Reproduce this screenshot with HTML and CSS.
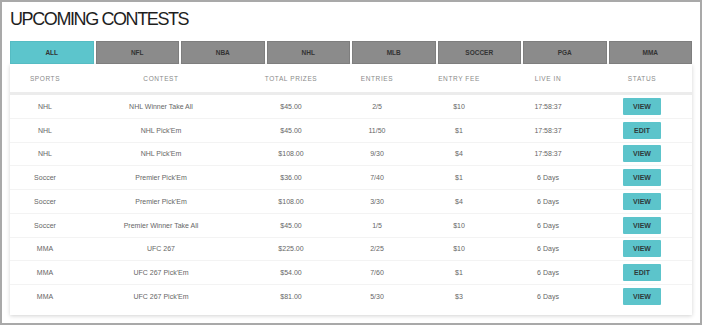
FILE: index.html
```html
<!DOCTYPE html>
<html lang="en">
<head>
    <meta charset="UTF-8">
    <meta name="viewport" content="width=device-width, initial-scale=1.0">
    <title>Upcoming Contests</title>
    <link rel="stylesheet" href="styles.css">
</head>
<body>

    <div class="frame">
        <h1>UPCOMING CONTESTS</h1>

        <!-- Sport Tabs -->
        <div class="tabs">
            <div class="tab active">ALL</div>
            <div class="tab">NFL</div>
            <div class="tab">NBA</div>
            <div class="tab">NHL</div>
            <div class="tab">MLB</div>
            <div class="tab">SOCCER</div>
            <div class="tab">PGA</div>
            <div class="tab">MMA</div>
        </div>

        <!-- Contests Table -->
        <div class="card">
            <div class="row head">
                <div>SPORTS</div>
                <div>CONTEST</div>
                <div>TOTAL PRIZES</div>
                <div>ENTRIES</div>
                <div>ENTRY FEE</div>
                <div>LIVE IN</div>
                <div>STATUS</div>
            </div>

            <div class="row">
                <div>NHL</div><div>NHL Winner Take All</div><div>$45.00</div><div>2/5</div><div>$10</div><div>17:58:37</div>
                <div><button class="btn">VIEW</button></div>
            </div>
            <div class="row">
                <div>NHL</div><div>NHL Pick'Em</div><div>$45.00</div><div>11/50</div><div>$1</div><div>17:58:37</div>
                <div><button class="btn">EDIT</button></div>
            </div>
            <div class="row">
                <div>NHL</div><div>NHL Pick'Em</div><div>$108.00</div><div>9/30</div><div>$4</div><div>17:58:37</div>
                <div><button class="btn">VIEW</button></div>
            </div>
            <div class="row">
                <div>Soccer</div><div>Premier Pick'Em</div><div>$36.00</div><div>7/40</div><div>$1</div><div>6 Days</div>
                <div><button class="btn">VIEW</button></div>
            </div>
            <div class="row">
                <div>Soccer</div><div>Premier Pick'Em</div><div>$108.00</div><div>3/30</div><div>$4</div><div>6 Days</div>
                <div><button class="btn">VIEW</button></div>
            </div>
            <div class="row">
                <div>Soccer</div><div>Premier Winner Take All</div><div>$45.00</div><div>1/5</div><div>$10</div><div>6 Days</div>
                <div><button class="btn">VIEW</button></div>
            </div>
            <div class="row">
                <div>MMA</div><div>UFC 267</div><div>$225.00</div><div>2/25</div><div>$10</div><div>6 Days</div>
                <div><button class="btn">VIEW</button></div>
            </div>
            <div class="row">
                <div>MMA</div><div>UFC 267 Pick'Em</div><div>$54.00</div><div>7/60</div><div>$1</div><div>6 Days</div>
                <div><button class="btn">EDIT</button></div>
            </div>
            <div class="row">
                <div>MMA</div><div>UFC 267 Pick'Em</div><div>$81.00</div><div>5/30</div><div>$3</div><div>6 Days</div>
                <div><button class="btn">VIEW</button></div>
            </div>
        </div>
    </div>

</body>
</html>
```

FILE: styles.css
```css
body {
    margin: 0;
    padding: 0;
    font-family: "Liberation Sans", Arial, sans-serif;
    background-color: #fff;
}

.frame {
    width: 702px;
    height: 325px;
    box-sizing: border-box;
    border: 2px solid #a9a9a9;
    padding: 6px 8px 0 8px;
}

h1 {
    margin: 0 0 11px 0;
    font-size: 18px;
    line-height: 22px;
    font-weight: normal;
    letter-spacing: -1.4px;
    color: #1e1e1e;
}

/* Sport Tabs */
.tabs {
    display: flex;
    gap: 2px;
}

.tab {
    flex: 1;
    height: 23px;
    box-sizing: border-box;
    display: flex;
    justify-content: center;
    align-items: center;
    background-color: #8b8b8b;
    border: 1px solid #7e7e7e;
    color: #333;
    font-size: 6.5px;
    font-weight: bold;
}

.tab.active {
    background-color: #5cc5cc;
    border-color: #55bcc3;
}

/* Table Card */
.card {
    background-color: #fff;
    box-shadow: 0 1px 4px rgba(0, 0, 0, 0.18);
    padding-bottom: 6px;
}

.row {
    display: grid;
    grid-template-columns: 70px 162px 98px 74px 90px 88px 100px;
    height: 23.75px;
    align-items: center;
    text-align: center;
    font-size: 7px;
    color: #666;
    border-bottom: 1px solid #f3f3f3;
    box-sizing: border-box;
}

.row:last-child {
    border-bottom: none;
}

.row.head {
    height: 31px;
    border-bottom: 3px solid #ececec;
    color: #8a8a8a;
    font-size: 6.5px;
    letter-spacing: 0.6px;
}

.btn {
    width: 38px;
    height: 17px;
    border: none;
    border-radius: 1px;
    background-color: #5cc4cb;
    color: #2f3a3b;
    font-family: inherit;
    font-size: 7px;
    font-weight: bold;
    padding: 0;
    cursor: pointer;
}
```
